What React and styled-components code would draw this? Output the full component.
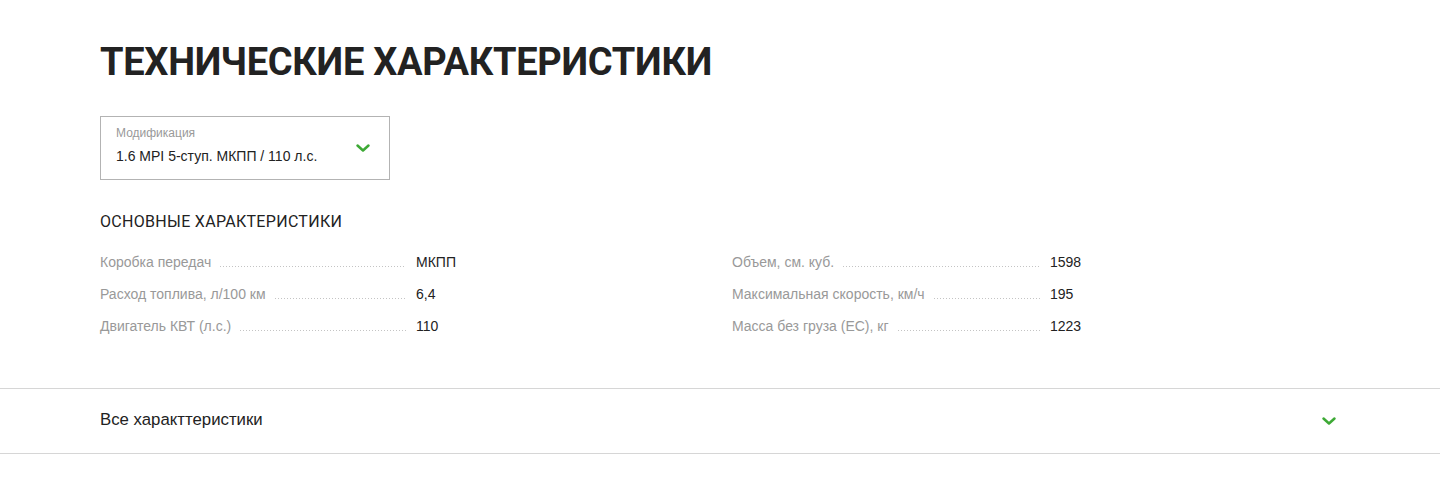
import React from "react";
import styled, { createGlobalStyle } from "styled-components";

const GlobalStyle = createGlobalStyle`
  body {
    margin: 0;
    padding: 0;
    background: #ffffff;
    font-family: "Liberation Sans", Arial, sans-serif;
    color: #222222;
  }
`;

const Page = styled.div`
  padding-top: 40px;
`;

const Container = styled.div`
  padding: 0 100px;
`;

const Title = styled.h1`
  margin: 0;
  font-family: Roboto, "Noto Sans", sans-serif;
  font-weight: 700;
  font-size: 38px;
  line-height: 44px;
  letter-spacing: -0.28px;
  color: #222222;
`;

const Select = styled.div`
  margin-top: 32px;
  width: 290px;
  height: 64px;
  box-sizing: border-box;
  border: 1px solid #b3b3b3;
  padding: 9px 15px 0 15px;
  display: flex;
  align-items: center;
  justify-content: space-between;
`;

const SelectText = styled.div`
  display: flex;
  flex-direction: column;
  gap: 7px;
  align-self: flex-start;
`;

const SelectLabel = styled.span`
  font-size: 12px;
  line-height: 14px;
  color: #999999;
`;

const SelectValue = styled.span`
  font-size: 14px;
  line-height: 18px;
  color: #222222;
`;

const Chevron = ({ size = 16 }) => (
  <svg width={size} height={size} viewBox="0 0 16 16" fill="none">
    <path
      d="M2.5 5.5 L8 10.5 L13.5 5.5"
      stroke="#3da935"
      strokeWidth="2.5"
      strokeLinecap="round"
      strokeLinejoin="round"
    />
  </svg>
);

const ChevronWrap = styled.span`
  display: flex;
  margin-right: ${(p) => p.$right || 0}px;
  margin-top: ${(p) => p.$top || 0}px;
`;

const SectionTitle = styled.h2`
  margin: 32px 0 0 0;
  font-family: Roboto, "Noto Sans", sans-serif;
  font-weight: 400;
  font-size: 16px;
  line-height: 20px;
  letter-spacing: 0.3px;
  color: #222222;
`;

const SpecGrid = styled.div`
  margin-top: 14px;
  display: grid;
  grid-template-columns: 632px 1fr;
`;

const SpecColumn = styled.div`
  display: flex;
  flex-direction: column;
`;

const SpecRow = styled.div`
  display: grid;
  grid-template-columns: ${(p) => p.$labelWidth}px 1fr;
  column-gap: 10px;
  height: 32px;
  align-items: center;
  font-size: 14px;
`;

const SpecLabel = styled.div`
  display: flex;
  align-items: baseline;
  color: #999999;
  white-space: nowrap;
`;

const Dots = styled.span`
  flex: 1;
  margin-left: 9px;
  height: 1px;
  background-image: linear-gradient(to right, #c4c4c4 1px, transparent 1px);
  background-size: 3px 1px;
  background-repeat: repeat-x;
`;

const SpecValue = styled.div`
  color: #222222;
`;

const Accordion = styled.div`
  margin-top: 46px;
  border-top: 1px solid #d6d6d6;
  border-bottom: 1px solid #d6d6d6;
`;

const AccordionHead = styled.div`
  height: 64px;
  padding: 0 100px;
  display: flex;
  align-items: center;
  justify-content: space-between;
  font-size: 16.8px;
  color: #222222;
`;

const AccordionLabel = styled.span`
  margin-top: -2px;
`;

const left = [
  ["Коробка передач", "МКПП"],
  ["Расход топлива, л/100 км", "6,4"],
  ["Двигатель КВТ (л.с.)", "110"],
];

const right = [
  ["Объем, см. куб.", "1598"],
  ["Максимальная скорость, км/ч", "195"],
  ["Масса без груза (ЕС), кг", "1223"],
];

const Column = ({ rows, labelWidth }) => (
  <SpecColumn>
    {rows.map(([label, value]) => (
      <SpecRow key={label} $labelWidth={labelWidth}>
        <SpecLabel>
          {label}
          <Dots />
        </SpecLabel>
        <SpecValue>{value}</SpecValue>
      </SpecRow>
    ))}
  </SpecColumn>
);

export default function App() {
  return (
    <>
      <GlobalStyle />
      <Page>
        <Container>
          <Title>ТЕХНИЧЕСКИЕ ХАРАКТЕРИСТИКИ</Title>
          <Select>
            <SelectText>
              <SelectLabel>Модификация</SelectLabel>
              <SelectValue>1.6 MPI 5-ступ. МКПП / 110 л.с.</SelectValue>
            </SelectText>
            <ChevronWrap $right={3} $top={-9}>
              <Chevron />
            </ChevronWrap>
          </Select>
          <SectionTitle>ОСНОВНЫЕ ХАРАКТЕРИСТИКИ</SectionTitle>
          <SpecGrid>
            <Column rows={left} labelWidth={306} />
            <Column rows={right} labelWidth={308} />
          </SpecGrid>
        </Container>
        <Accordion>
          <AccordionHead>
            <AccordionLabel>Все характтеристики</AccordionLabel>
            <ChevronWrap $right={3}>
              <Chevron />
            </ChevronWrap>
          </AccordionHead>
        </Accordion>
      </Page>
    </>
  );
}
